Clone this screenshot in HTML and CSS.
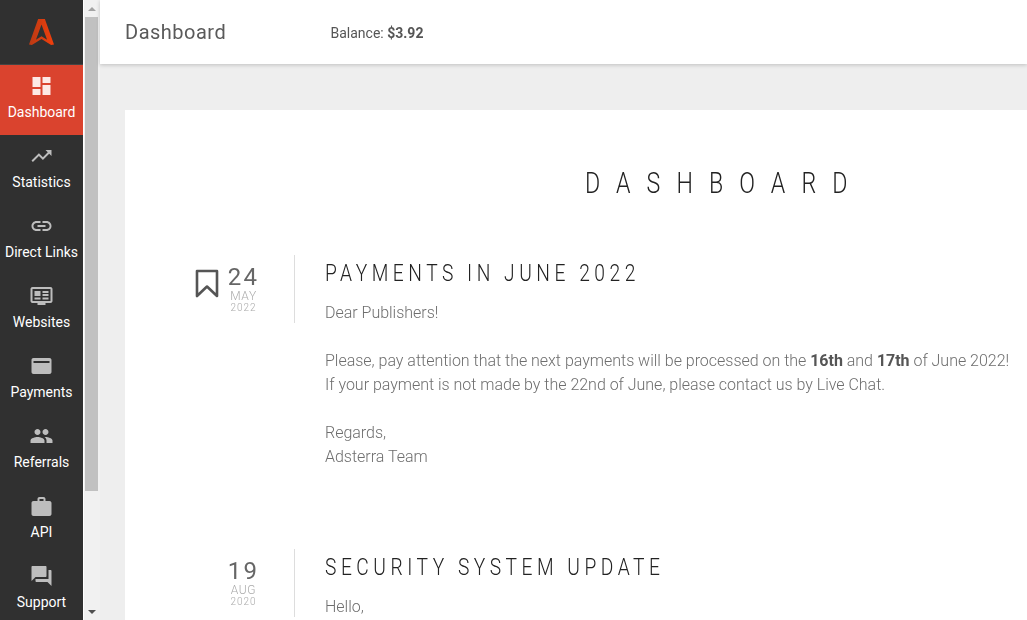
FILE: index.html
```html
<!DOCTYPE html>
<html lang="en">
<head>
<meta charset="utf-8">
<title>Dashboard</title>
<link rel="stylesheet" href="styles.css">
</head>
<body>
<div class="app">
  <nav class="sidebar">
    <div class="logo">
      <svg width="25" height="26" viewBox="0 0 26 28" preserveAspectRatio="none"><defs><linearGradient id="lg" x1="0" y1="0" x2="1" y2="0"><stop offset="0" stop-color="#b93a14"/><stop offset="1" stop-color="#f23f0c"/></linearGradient></defs><path fill="url(#lg)" d="M9.5 0h7L26 27.5l-3 .5-10-6.5L3 28l-3-.5zM13 6L7.2 22.3l5.8-3.8 5.8 3.8z"/></svg>
    </div>
    <a class="item active"><svg class="ico" viewBox="0 0 24 24"><path d="M3 13h8V3H3zm0 8h8v-6H3zm10 0h8V11h-8zm0-18v6h8V3z"/></svg><span>Dashboard</span></a>
    <a class="item"><svg class="ico" viewBox="0 0 24 24"><path d="M16 6l2.29 2.29-4.88 4.88-4-4L2 16.59 3.41 18l6-6 4 4 6.3-6.29L22 12V6z"/></svg><span>Statistics</span></a>
    <a class="item"><svg class="ico" viewBox="0 0 24 24"><path d="M3.9 12c0-1.71 1.39-3.1 3.1-3.1h4V7H7c-2.76 0-5 2.24-5 5s2.24 5 5 5h4v-1.9H7c-1.71 0-3.1-1.39-3.1-3.1zM8 13h8v-2H8zm9-6h-4v1.9h4c1.71 0 3.1 1.39 3.1 3.1s-1.39 3.1-3.1 3.1h-4V17h4c2.76 0 5-2.24 5-5s-2.24-5-5-5z"/></svg><span>Direct Links</span></a>
    <a class="item"><svg class="ico" viewBox="0 0 24 24"><path d="M21 3H3c-1.1 0-2 .9-2 2v12c0 1.1.9 2 2 2h5v2h8v-2h5c1.1 0 2-.9 2-2V5c0-1.100-.9-2-2-2zm0 14H3V5h18zM5 7h6v5H5zm8 0h6v2h-6zm0 3h6v2h-6zM5 13.500h6v2H5zm8 0h6v2h-6z"/></svg><span>Websites</span></a>
    <a class="item"><svg class="ico" viewBox="0 0 24 24"><path d="M20 4H4c-1.110 0-2 .89-2 2v12c0 1.110.89 2 2 2h16c1.110 0 2-.89 2-2V6c0-1.110-.89-2-2-2zm0 5H4V7h16z"/></svg><span>Payments</span></a>
    <a class="item"><svg class="ico" viewBox="0 0 24 24"><path d="M16 11c1.660 0 2.990-1.340 2.990-3S17.660 5 16 5s-3 1.340-3 3 1.340 3 3 3zm-8 0c1.660 0 2.990-1.340 2.990-3S9.660 5 8 5 5 6.340 5 8s1.340 3 3 3zm0 2c-2.330 0-7 1.170-7 3.500V19h14v-2.500c0-2.330-4.670-3.500-7-3.500zm8 0c-.29 0-.62.02-.97.05 1.160.84 1.970 1.970 1.970 3.450V19h6v-2.500c0-2.330-4.670-3.500-7-3.500z"/></svg><span>Referrals</span></a>
    <a class="item"><svg class="ico" viewBox="0 0 24 24"><path d="M20 7h-4V5c0-1.110-.89-2-2-2h-4c-1.110 0-2 .89-2 2v2H4c-1.110 0-2 .89-2 2v11c0 1.110.89 2 2 2h16c1.110 0 2-.89 2-2V9c0-1.110-.89-2-2-2zm-6 0h-4V5h4z"/></svg><span>API</span></a>
    <a class="item"><svg class="ico" viewBox="0 0 24 24"><path d="M21 6h-2v9H6v2c0 .55.45 1 1 1h11l4 4V7c0-.55-.45-1-1-1zm-4 6V3c0-.55-.45-1-1-1H3c-.55 0-1 .45-1 1v14l4-4h10c.55 0 1-.45 1-1z"/></svg><span>Support</span></a>
  </nav>
  <div class="scrollbar">
    <div class="arrow up"></div>
    <div class="thumb"></div>
    <div class="arrow down"></div>
  </div>
  <div class="page">
    <header class="topbar">
      <div class="topbar-inner">
        <h1 class="page-title">Dashboard</h1>
        <p class="balance">Balance: <b>$3.92</b></p>
      </div>
    </header>
    <main class="content">
      <section class="card">
        <div class="card-inner">
          <h2 class="card-title">DASHBOARD</h2>
          <article class="post post-first">
            <div class="meta">
              <svg class="bookmark" width="24" height="29" viewBox="0 0 24 29"><path d="M2 2h20v25L12 17.500 2 27z" fill="none" stroke="#555" stroke-width="2.600" stroke-linejoin="round"/></svg>
              <div class="date"><span class="day">24</span><span class="month">MAY</span><span class="year">2022</span></div>
            </div>
            <div class="body">
              <h3 class="post-title">PAYMENTS IN JUNE 2022</h3>
              <p>Dear Publishers!</p>
              <p>Please, pay attention that the next payments will be processed on the <b>16th</b> and <b>17th</b> of June 2022!<br>If your payment is not made by the 22nd of June, please contact us by Live Chat.</p>
              <p>Regards,<br>Adsterra Team</p>
            </div>
          </article>
          <article class="post">
            <div class="meta">
              <div class="date"><span class="day">19</span><span class="month">AUG</span><span class="year">2020</span></div>
            </div>
            <div class="body">
              <h3 class="post-title">SECURITY SYSTEM UPDATE</h3>
              <p>Hello,</p>
            </div>
          </article>
        </div>
      </section>
    </main>
  </div>
</div>
</body>
</html>
```
FILE: styles.css
```css
* { box-sizing: border-box; }
html, body { margin: 0; height: 100%; overflow: hidden; }
body { font-family: Roboto, "Liberation Sans", sans-serif; color: #555; background: #eee; }
.app { display: flex; height: 620px; overflow: hidden; }
.sidebar { width: 83px; flex: none; background: #303030; display: flex; flex-direction: column; }
.logo { height: 65px; flex: none; display: flex; justify-content: center; padding-top: 19px; border-bottom: 1px solid #444; }
.item { height: 70px; flex: none; display: flex; flex-direction: column; align-items: center; padding-top: 9px; color: #fff; font-size: 14px; line-height: 20px; white-space: nowrap; }
.item span { margin-top: 4px; }
.item.active { background: #da432e; }
.ico { width: 24px; height: 24px; fill: #bdbdbd; display: block; transform: translateX(-.5px); }
.active .ico { fill: #fde9e5; }
.scrollbar { width: 17px; flex: none; background: #f1f1f1; border-left: 1px solid #fff; display: flex; flex-direction: column; position: relative; }
.thumb { height: 474px; margin: 0 2px 0 1px; background: #c1c1c1; }
.arrow { height: 17px; flex: none; position: relative; }
.arrow::after { content: ""; position: absolute; left: 4px; border-left: 4px solid transparent; border-right: 4px solid transparent; }
.arrow.up::after { top: 7px; border-bottom: 4px solid #a3a3a3; }
.arrow.down { margin-top: auto; }
.arrow.down::after { top: 7px; border-top: 4px solid #505050; }
.page { flex: 1; min-width: 0; display: flex; flex-direction: column; }
.topbar { height: 64px; flex: none; background: #fff; box-shadow: 0 1px 4px rgba(0,0,0,.2); position: relative; }
.topbar-inner { height: 100%; display: flex; align-items: center; padding-left: 25px; will-change: transform; }
.page-title { margin: 0; width: 205.500px; font-size: 20px; font-weight: 400; letter-spacing: .5px; color: #5a5a5a; }
.balance { margin: 2px 0 0; font-size: 14px; }
.content { flex: 1; padding: 46px 0 0 25px; min-height: 0; overflow: hidden; }
.card { background: #fff; height: 600px; }
.card-inner { padding-top: 53px; will-change: transform; }
.card-title { margin: 0 0 52px 460px; font-weight: 300; font-size: 29px; line-height: 40px; letter-spacing: 20.100px; color: #222; white-space: nowrap; transform: scaleX(.8); transform-origin: left center; }
.post { display: flex; }
.post-first { height: 294px; }
.meta { width: 170px; height: 68px; flex: none; border-right: 1px solid #ddd; display: flex; justify-content: flex-end; align-items: flex-start; padding: 12px 36px 0 0; }
.bookmark { margin: 2px 10px 0 0; }
.date { width: 29px; display: flex; flex-direction: column; align-items: center; font-weight: 300; }
.day { font-size: 24px; line-height: 20px; letter-spacing: 2.200px; color: #666; font-weight: 400; white-space: nowrap; }
.month { font-size: 12px; line-height: 12px; margin-top: 3px; color: #aaa; letter-spacing: .6px; }
.year { font-size: 10px; line-height: 12px; color: #aaa; letter-spacing: 1px; }
.body { padding-left: 30px; font-size: 16px; font-weight: 300; line-height: 24px; white-space: nowrap; letter-spacing: -.015px; color: #6e6e6e; }
.body b { font-weight: 700; color: #555; }
.body p { margin: 0 0 24px; }
.post-title { margin: 0 0 10px; font-weight: 300; font-size: 24px; line-height: 36px; letter-spacing: 5.650px; color: #222; transform: scaleX(.8); transform-origin: left center; }
```
